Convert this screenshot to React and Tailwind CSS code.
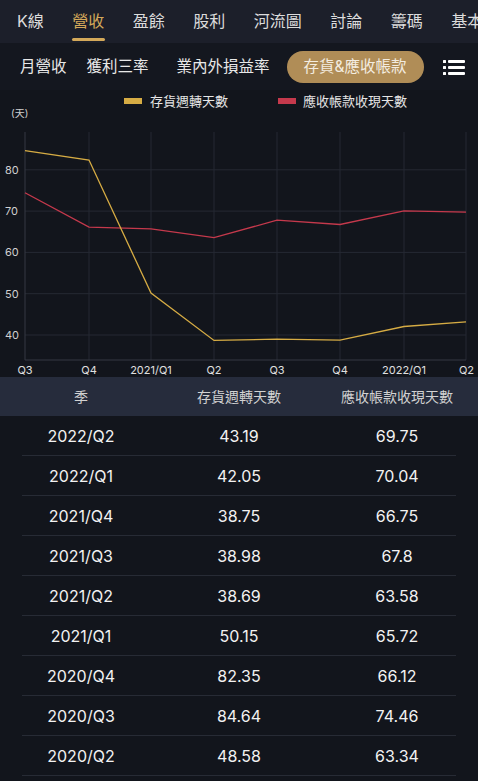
import React from "react";

const FONT = { fontFamily: '"Inter", "Noto Sans CJK TC", sans-serif' };

const tabs = ["K線", "營收", "盈餘", "股利", "河流圖", "討論", "籌碼", "基本"];
const subTabs = ["月營收", "獲利三率", "業內外損益率"];

const labels = ["Q3", "Q4", "2021/Q1", "Q2", "Q3", "Q4", "2022/Q1", "Q2"];
const inventory = [84.64, 82.35, 50.15, 38.69, 38.98, 38.75, 42.05, 43.19];
const receivable = [74.46, 66.12, 65.72, 63.58, 67.8, 66.75, 70.04, 69.75];

const rows = [
  ["2022/Q2", "43.19", "69.75"],
  ["2022/Q1", "42.05", "70.04"],
  ["2021/Q4", "38.75", "66.75"],
  ["2021/Q3", "38.98", "67.8"],
  ["2021/Q2", "38.69", "63.58"],
  ["2021/Q1", "50.15", "65.72"],
  ["2020/Q4", "82.35", "66.12"],
  ["2020/Q3", "84.64", "74.46"],
  ["2020/Q2", "48.58", "63.34"],
];

// chart coords are relative to the svg top (page y = 90)
const xs = [25, 89, 151, 214, 277, 340, 404, 466];
const yOf = (v) => 335 - (v - 40) * 4.13 - 90;
const pts = (arr) => arr.map((v, i) => `${xs[i]},${yOf(v).toFixed(1)}`).join(" ");

function Chart() {
  return (
    <svg width="478" height="287" viewBox="0 0 478 287" className="block">
      <rect x="124" y="8" width="18" height="6" fill="#d6ac44" />
      <text x="150" y="15.5" fontSize="13" fill="#e5e5e5">存貨週轉天數</text>
      <rect x="278" y="8" width="18" height="6" fill="#c5394c" />
      <text x="303" y="15.5" fontSize="13" fill="#e5e5e5">應收帳款收現天數</text>
      <text x="11" y="27" fontSize="10" fill="#cfcfcf">(天)</text>

      {[80, 70, 60, 50, 40].map((v) => (
        <g key={v}>
          <line x1="25" x2="466" y1={yOf(v)} y2={yOf(v)} stroke="#252933" strokeWidth="1" />
          <text x="5" y={yOf(v) + 4} fontSize="11" fill="#d0d0d0">{v}</text>
        </g>
      ))}
      {xs.map((x, i) => (
        <line key={i} x1={x} x2={x} y1="42" y2="270" stroke={i === 0 ? "#343843" : "#252933"} strokeWidth="1" />
      ))}
      <line x1="25" x2="466" y1="270" y2="270" stroke="#343843" strokeWidth="1" />

      <polyline points={pts(receivable)} fill="none" stroke="#c5394c" strokeWidth="1.3" />
      <polyline points={pts(inventory)} fill="none" stroke="#d6ac44" strokeWidth="1.3" />

      {labels.map((l, i) => (
        <text
          key={i}
          x={i === 7 ? 474 : xs[i]}
          y="284"
          fontSize="11"
          fill="#e0e0e0"
          textAnchor={i === 7 ? "end" : "middle"}
        >
          {l}
        </text>
      ))}
    </svg>
  );
}

function MenuIcon() {
  return (
    <svg width="22" height="16" viewBox="0 0 22 16">
      {[1, 7, 13].map((y) => (
        <g key={y} fill="#fff">
          <rect x="0" y={y} width="3" height="3" rx="0.5" />
          <rect x="5" y={y} width="17" height="3" rx="1" />
        </g>
      ))}
    </svg>
  );
}

export default function App() {
  return (
    <div style={FONT} className="w-[478px] h-[781px] overflow-hidden bg-[#12151c] text-white">
      <div className="h-[43px] bg-[#1c1f2a] flex items-start pl-[17px] gap-[28.5px] whitespace-nowrap">
        {tabs.map((t, i) => (
          <div key={t} className="relative h-[43px] flex flex-col items-center shrink-0">
            <span className={`text-[16px] leading-[16px] mt-[13px] ${i === 1 ? "text-[#d4a95a]" : "text-[#dcdcdc]"}`}>
              {t}
            </span>
            {i === 1 && <div className="absolute top-[38px] w-[33px] h-[3px] bg-[#d4a95a] rounded-sm" />}
          </div>
        ))}
      </div>

      <div className="h-[47px] bg-[#14171f] flex items-center pl-[20px] whitespace-nowrap">
        <span className="text-[15.5px] text-[#e8e8e8]">{subTabs[0]}</span>
        <span className="text-[15.5px] text-[#e8e8e8] ml-[20px]">{subTabs[1]}</span>
        <span className="text-[15.5px] text-[#e8e8e8] ml-[28px]">{subTabs[2]}</span>
        <div className="ml-[17px] w-[137px] h-[32px] rounded-full bg-[#b08d57] flex items-center justify-center text-[15.5px] text-[#f3ece0]">
          存貨&amp;應收帳款
        </div>
        <div className="ml-[19px] flex items-center">
          <MenuIcon />
        </div>
      </div>

      <Chart />

      <div className="h-[39px] bg-[#262c3c] grid grid-cols-[140px_198px_140px] items-center text-[14px] text-[#d2d2d2]">
        <div className="text-center pl-[22px]">季</div>
        <div className="text-center">存貨週轉天數</div>
        <div className="text-center pr-[22px]">應收帳款收現天數</div>
      </div>

      <div className="px-[22px]">
        {rows.map((r) => (
          <div key={r[0]} className="h-[40px] border-b border-[#272b35] grid grid-cols-[118px_198px_118px] items-center text-[16px] text-[#f2f2f2]">
            <div className="text-center">{r[0]}</div>
            <div className="text-center">{r[1]}</div>
            <div className="text-center">{r[2]}</div>
          </div>
        ))}
      </div>
    </div>
  );
}
